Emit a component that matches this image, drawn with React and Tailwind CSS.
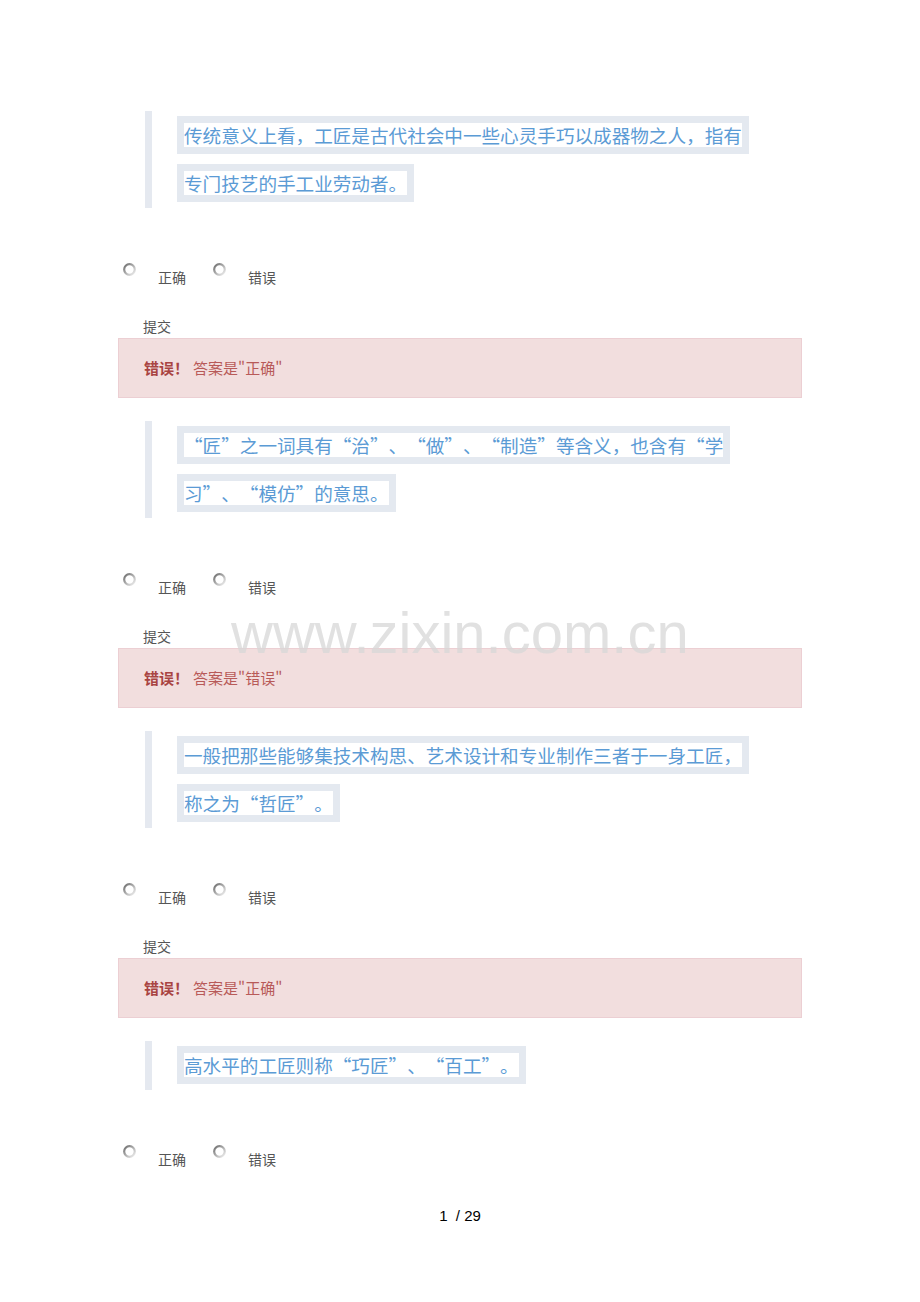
import React from "react";

const cjk = { fontFamily: '"Noto Sans CJK SC", "Noto Sans", sans-serif' };

function Radio() {
  return (
    <svg width="13" height="13" viewBox="0 0 13 13" className="shrink-0">
      <defs>
        <linearGradient id="rg" x1="0" y1="0" x2="1" y2="1">
          <stop offset="0" stopColor="#6a6a6a" />
          <stop offset="0.45" stopColor="#a8a8a8" />
          <stop offset="1" stopColor="#f2f2f2" />
        </linearGradient>
      </defs>
      <circle cx="6.5" cy="6.5" r="5.3" fill="#fff" stroke="url(#rg)" strokeWidth="2.2" />
    </svg>
  );
}

function Quote({ lines }) {
  return (
    <div className="ml-[145px] border-l-[7px] border-[#e5e9f0] pl-[25px] pt-[5px] pb-[6px] flex flex-col gap-[10px]">
      {lines.map((l, i) => (
        <div key={i} className="h-[38px]">
          <span
            className="inline-block h-[38px] border-[7px] border-[#e4e9f0] bg-white text-[18.6px] leading-[24px] text-[#5b9bd5] whitespace-nowrap [font-feature-settings:'fwid'] [text-spacing-trim:space-all]"
            style={cjk}
          >
            {l}
          </span>
        </div>
      ))}
    </div>
  );
}

function Radios() {
  return (
    <div className="mt-[55px] ml-[123px] h-[25px] flex items-start text-[14px] leading-[20px] text-[#555]" style={cjk}>
      <Radio />
      <span className="ml-[22px] mt-[4px]">正确</span>
      <span className="ml-[27px]"><Radio /></span>
      <span className="ml-[22px] mt-[4px]">错误</span>
    </div>
  );
}

function Block({ lines, answer }) {
  return (
    <div>
      <Quote lines={lines} />
      <Radios />
      <div className="mt-[28px] ml-[143px] text-[14px] leading-[20px] text-[#555]" style={cjk}>
        提交
      </div>
      <div
        className="mt-[2px] ml-[118px] w-[684px] h-[60px] border border-[#eccfd3] bg-[#f2dede] flex items-center pl-[25px] text-[15px] text-[#a94442] [text-spacing-trim:space-all]"
        style={cjk}
      >
        <span className="font-bold">错误！</span>
        <span className="ml-[4px] text-[#b85a58]">答案是"{answer}"</span>
      </div>
      <div className="h-[23px]" />
    </div>
  );
}

export default function App() {
  return (
    <div lang="zh-CN" className="relative w-[920px] h-[1302px] bg-white overflow-hidden pt-[111px]">
      <Block
        lines={[
          "传统意义上看，工匠是古代社会中一些心灵手巧以成器物之人，指有",
          "专门技艺的手工业劳动者。",
        ]}
        answer="正确"
      />
      <Block
        lines={[
          "“匠”之一词具有“治”、“做”、“制造”等含义，也含有“学",
          "习”、“模仿”的意思。",
        ]}
        answer="错误"
      />
      <Block
        lines={[
          "一般把那些能够集技术构思、艺术设计和专业制作三者于一身工匠，",
          "称之为“哲匠”。",
        ]}
        answer="正确"
      />
      <Quote lines={["高水平的工匠则称“巧匠”、“百工”。"]} />
      <Radios />
      <div
        className="mt-[36px] text-center text-[15px] leading-[20px] text-black"
        style={{ fontFamily: '"Liberation Sans", Arial, sans-serif' }}
      >
        1&nbsp;&nbsp;/ 29
      </div>
      <div
        className="absolute left-[231px] top-[604px] text-[58px] leading-[58px] text-[#d8d8d8] opacity-75 whitespace-nowrap pointer-events-none"
        style={{ fontFamily: '"Liberation Sans", Arial, sans-serif' }}
      >
        www.zixin.com.cn
      </div>
    </div>
  );
}
